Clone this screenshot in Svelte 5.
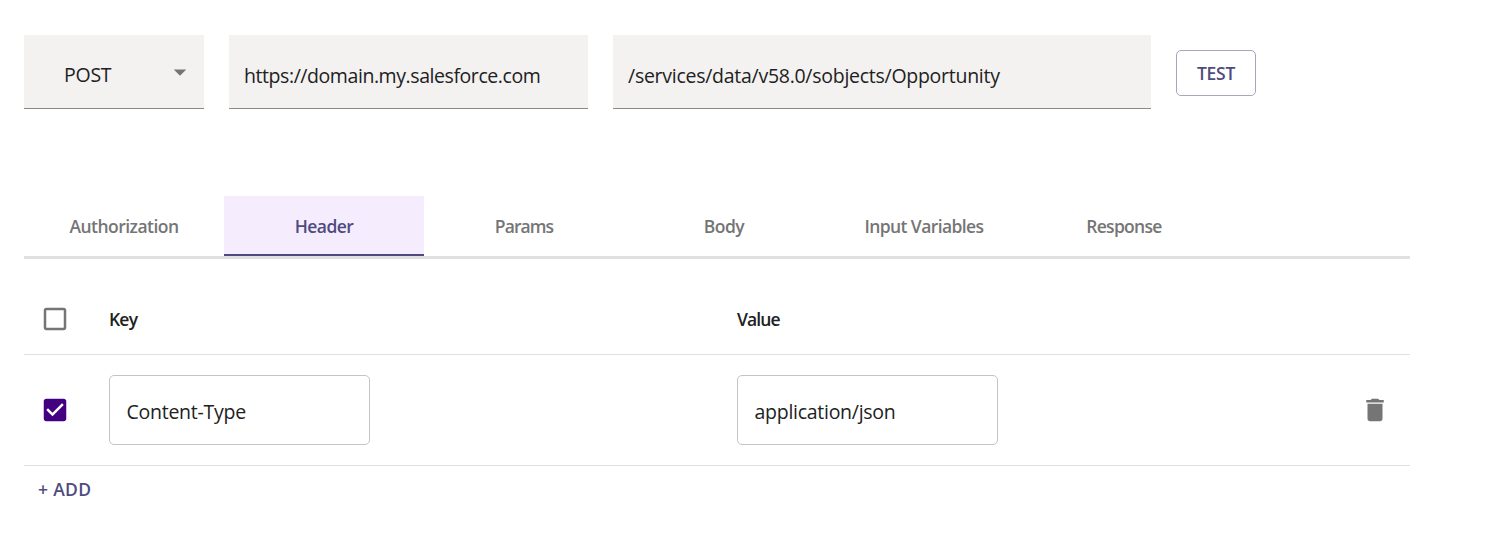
<script>
  const tabs = [
    { label: 'Authorization', spacing: '-0.52px' },
    { label: 'Header', spacing: '-0.55px' },
    { label: 'Params', spacing: '-0.9px' },
    { label: 'Body', spacing: '-0.5px' },
    { label: 'Input Variables', spacing: '-0.6px' },
    { label: 'Response', spacing: '-0.7px' }
  ];
  let active = $state('Header');
</script>

<main>
  <section class="request">
    <div class="field method">
      <span class="t post">POST</span>
      <svg width="30" height="30" viewBox="0 0 24 24"><path d="M7 10l5 5 5-5z" /></svg>
    </div>
    <div class="field host"><span class="t url">https://domain.my.salesforce.com</span></div>
    <div class="field path"><span class="t route">/services/data/v58.0/sobjects/Opportunity</span></div>
    <button class="test"><span class="t">TEST</span></button>
  </section>

  <nav>
    {#each tabs as tab}
      <button class="tab" class:active={active === tab.label} onclick={() => (active = tab.label)}>
        <span class="t" style="letter-spacing: {tab.spacing}">{tab.label}</span>
      </button>
    {/each}
  </nav>

  <section class="table">
    <div class="row head">
      <div class="check">
        <svg width="30" height="30" viewBox="0 0 24 24" fill="#757575"><path d="M19 5v14H5V5h14m0-2H5c-1.100 0-2 .9-2 2v14c0 1.100.9 2 2 2h14c1.100 0 2-.9 2-2V5c0-1.100-.9-2-2-2z" /></svg>
      </div>
      <div class="cell"><span class="t key">Key</span></div>
      <div class="cell"><span class="t value">Value</span></div>
      <div class="remove"></div>
    </div>
    <div class="row entry">
      <div class="check">
        <svg width="30" height="30" viewBox="0 0 24 24" fill="#430080"><path d="M19 3H5c-1.110 0-2 .9-2 2v14c0 1.100.89 2 2 2h14c1.110 0 2-.9 2-2V5c0-1.100-.89-2-2-2zm-9 14l-5-5 1.410-1.410L10 14.170l7.590-7.590L19 8l-9 9z" /></svg>
      </div>
      <div class="cell"><div class="box"><span class="t ctype">Content-Type</span></div></div>
      <div class="cell"><div class="box"><span class="t json">application/json</span></div></div>
      <div class="remove">
        <svg width="30" height="30" viewBox="0 0 24 24" fill="#757575"><path d="M6 19c0 1.100.9 2 2 2h8c1.100 0 2-.9 2-2V7H6v12zM19 4h-3.500l-1-1h-5l-1 1H5v2h14V4z" /></svg>
      </div>
    </div>
  </section>
  <button class="add"><span class="t">+ ADD</span></button>
</main>

<style>
  :global(body) { background: #fff; }
  main {
    box-sizing: border-box;
    width: 1493px;
    height: 556px;
    padding: 35px 83px 0 24px;
    overflow: hidden;
    font-family: "Open Sans", "Noto Sans", sans-serif;
    font-size: 19.5px;
    color: #212121;
  }
  svg { display: block; flex: none; }
  .t { white-space: nowrap; }
  button {
    font: inherit;
    margin: 0;
    padding: 0;
    border: 0;
    background: none;
  }
  .request { display: flex; gap: 25px; height: 74px; }
  .field {
    box-sizing: border-box;
    height: 74px;
    background: #f3f2f1;
    border-bottom: 1px solid #8a8a8a;
    display: flex;
    align-items: center;
    padding: 7px 15px 0;
  }
  .method { width: 180px; padding: 6px 9px 0 40px; justify-content: space-between; }
  .method svg { fill: #757575; margin-top: -6px; }
  .host { width: 359px; }
  .path { width: 538px; }
  .post { letter-spacing: -0.25px; }
  .url { letter-spacing: -0.43px; }
  .route { letter-spacing: -0.27px; }
  .key { letter-spacing: -0.8px; }
  .value { letter-spacing: -0.9px; }
  .ctype { letter-spacing: -0.25px; }
  .json { letter-spacing: -0.27px; }
  .test {
    box-sizing: border-box;
    width: 80px;
    height: 46px;
    margin-top: 15px;
    border: 1px solid #a7a5c0;
    border-radius: 5px;
    color: #4f4b80;
    font-size: 17.5px;
    font-weight: 600;
    letter-spacing: -0.3px;
  }
  nav {
    display: flex;
    height: 60px;
    margin-top: 87px;
    border-bottom: 3px solid #e0e0e0;
  }
  .tab {
    box-sizing: border-box;
    width: 200px;
    height: 60px;
    padding-top: 2px;
    border-bottom: 2px solid transparent;
    color: #757575;
    font-size: 17.5px;
    font-weight: 600;
  }
  .tab.active { background: #f5ecfe; color: #4f4b80; border-bottom-color: #4f4b80; }
  .row {
    box-sizing: border-box;
    display: grid;
    grid-template-columns: 85px 628px 1fr 50px;
    align-items: center;
    border-bottom: 1px solid #e0e0e0;
  }
  .head { height: 96px; padding-top: 25px; font-size: 17.5px; font-weight: 600; }
  .entry { height: 111px; }
  .check { padding-left: 16px; }
  .box {
    box-sizing: border-box;
    width: 261px;
    height: 70px;
    padding: 2px 16.5px 0;
    border: 1px solid #c4c4c4;
    border-radius: 5px;
    display: flex;
    align-items: center;
  }
  .add {
    display: block;
    margin: 11px 0 0 14px;
    line-height: 24px;
    color: #4f4b80;
    font-size: 17.5px;
    font-weight: 600;
    letter-spacing: 0.3px;
  }
</style>
